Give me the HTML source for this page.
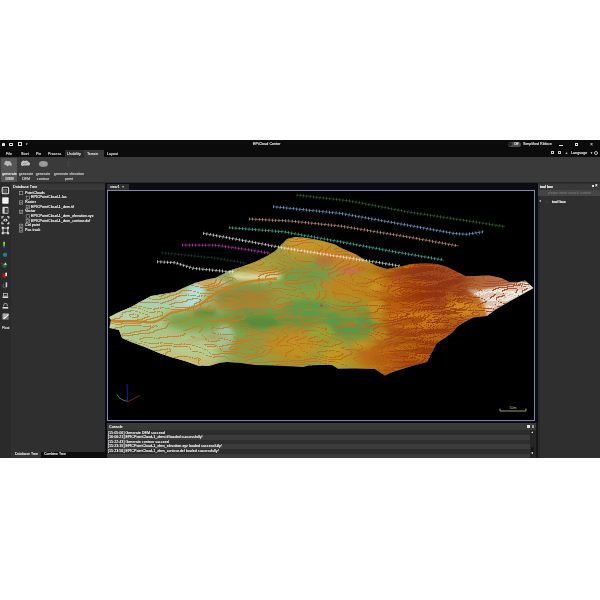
<!DOCTYPE html>
<html>
<head>
<meta charset="utf-8">
<title>EPiCloud Center</title>
<style>
html,body{margin:0;padding:0;background:#fff;}
body{width:600px;height:600px;position:relative;overflow:hidden;font-family:"Liberation Sans",sans-serif;}
#app{position:absolute;left:0;top:140px;width:600px;height:318px;background:#2e2e2e;overflow:hidden;}
.abs{position:absolute;}
.t{position:absolute;will-change:transform;white-space:nowrap;color:#d8d8d8;font-size:3.7px;line-height:4.8px;text-shadow:0 0 0.25px currentColor;}
#titlebar{left:0;top:0;width:600px;height:17px;background:#0b0b0b;}
#ribbon{left:0;top:17px;width:600px;height:25.5px;background:#3a3a3a;}
#ltool{left:0;top:43px;width:10.5px;height:275px;background:#2a2a2a;}
#lpanel{left:10.5px;top:43px;width:95px;height:275px;background:#2f2f2f;}
#rpanel{left:537.5px;top:43px;width:62.5px;height:275px;background:#2f2f2f;}
#center{left:105px;top:43px;width:433.5px;height:275px;background:#0c0c14;}
#view{left:107px;top:50px;width:428px;height:231px;background:#000;border:0.9px solid #8286b0;box-sizing:border-box;}
</style>
</head>
<body>
<div id="app">
  <div id="titlebar" class="abs"></div>
  <div id="ribbon" class="abs"></div>

  <!-- title bar -->
  <div class="abs" style="left:1.5px;top:3px;width:3.6px;height:3px;background:#e8e8e8;border-radius:0.4px;"></div>
  <div class="abs" style="left:9px;top:2.6px;width:4.4px;height:3.4px;border:0.7px solid #e0e0e0;box-sizing:border-box;border-radius:0.4px;"></div>
  <div class="abs" style="left:18px;top:2.4px;width:3.6px;height:3.8px;border:0.7px solid #e0e0e0;box-sizing:border-box;"></div>
  <div class="t" style="left:25.5px;top:2.2px;font-size:3px;color:#bbb;">▾</div>
  <div class="t" style="left:252.5px;top:2.3px;color:#e6e6e6;">EPiCloud Center</div>
  <div class="abs" style="left:507.5px;top:1.6px;width:13px;height:5.2px;background:#4a4a4a;border-radius:2.6px;"></div>
  <div class="abs" style="left:508.2px;top:2.3px;width:4px;height:4px;background:#222;border-radius:2px;"></div>
  <div class="t" style="left:513.6px;top:1.9px;font-size:3.3px;color:#f4f4f4;">Off</div>
  <div class="t" style="left:522.5px;top:1.8px;color:#ddd;">Simplified Ribbon</div>
  <div class="abs" style="left:559px;top:4.6px;width:3.6px;height:0.6px;background:#ddd;"></div>
  <div class="abs" style="left:574.6px;top:3px;width:3px;height:3px;border:0.6px solid #ddd;box-sizing:border-box;"></div>
  <div class="t" style="left:589.8px;top:1.6px;font-size:5px;color:#bbb;">×</div>
  <!-- menu row -->
  <div class="abs" style="left:65px;top:9.5px;width:18.5px;height:8px;background:#2c2c2c;"></div>
  <div class="abs" style="left:84px;top:9.5px;width:19.5px;height:8px;background:#3a3a3a;"></div>
  <div class="t" style="left:6px;top:11.6px;">File</div>
  <div class="t" style="left:20.5px;top:11.6px;">Start</div>
  <div class="t" style="left:35.5px;top:11.6px;">Pie</div>
  <div class="t" style="left:47.5px;top:11.6px;">Process</div>
  <div class="t" style="left:67px;top:11.6px;">Usability</div>
  <div class="t" style="left:87px;top:11.6px;">Terrain</div>
  <div class="t" style="left:106.5px;top:11.6px;">Layout</div>
  <div class="abs" style="left:550.5px;top:11.3px;width:3.2px;height:3.2px;border:0.6px solid #ccc;box-sizing:border-box;"></div>
  <div class="abs" style="left:557.5px;top:11.3px;width:3.2px;height:3.2px;border:0.6px solid #ccc;box-sizing:border-box;border-radius:0.6px;"></div>
  <div class="t" style="left:564.6px;top:11.2px;font-size:3px;color:#ccc;">▲</div>
  <div class="t" style="left:570.5px;top:11.4px;color:#e0e0e0;">Language</div>
  <div class="t" style="left:589.6px;top:11px;font-size:3px;color:#ccc;">▼</div>
  <div class="abs" style="left:594.2px;top:11px;width:3.6px;height:3.6px;border:0.6px solid #bbb;box-sizing:border-box;border-radius:2px;"></div>
  <!-- ribbon -->
  <div class="abs" style="left:1px;top:18px;width:16px;height:24px;background:#555;"></div>
  <svg class="abs" style="left:0;top:17px;" width="100" height="26" viewBox="0 0 100 26">
    <g fill="#b8b8b8"><circle cx="6.6" cy="5.4" r="1.7"/><circle cx="9" cy="6" r="1.9"/><circle cx="7.6" cy="7.6" r="1.6"/><circle cx="10.6" cy="7.4" r="1.3"/><circle cx="5.4" cy="6.8" r="1.2"/></g>
    <g fill="#c4c4c4"><ellipse cx="25.2" cy="6.4" rx="4.2" ry="2.2"/><circle cx="23.6" cy="5.4" r="1.8"/><circle cx="26.4" cy="5.2" r="1.6"/><circle cx="28.6" cy="7" r="1.4"/><circle cx="22.4" cy="7.6" r="1.3"/></g>
    <path d="M22.6 7.2l1.6-1.4l1.4 1.2l1.6-1.6" fill="none" stroke="#666" stroke-width="0.6"/>
    <ellipse cx="43.4" cy="7" rx="4.6" ry="2.9" fill="#8e8e8e"/>
    <ellipse cx="43.4" cy="6.6" rx="3.2" ry="1.7" fill="none" stroke="#b4b4b4" stroke-width="0.6"/>
    <ellipse cx="43.4" cy="6.4" rx="1.5" ry="0.7" fill="#a8a8a8"/>
    <path d="M69.8 4.4a2.2 2.2 0 1 0 0 4.4" fill="none" stroke="#4c4c4c" stroke-width="0.9"/>
  </svg>
  <div class="t" style="left:1.5px;top:31.8px;width:15px;text-align:center;color:#e4e4e4;">generate<br>DSM</div>
  <div class="t" style="left:17.5px;top:31.8px;width:16px;text-align:center;color:#c4c4c4;">generate<br>DEM</div>
  <div class="t" style="left:35.2px;top:31.8px;width:16px;text-align:center;color:#c4c4c4;">generate<br>contour</div>
  <div class="t" style="left:53px;top:31.8px;width:32px;text-align:center;color:#c4c4c4;">generate elevation<br>point</div>
  <div class="abs" style="left:0;top:42px;width:600px;height:1px;background:#2a2a2a;"></div>
  <div id="ltool" class="abs"></div>
  <div id="lpanel" class="abs"></div>

  <!-- left panel -->
  <div class="abs" style="left:10.5px;top:43.5px;width:95px;height:6px;background:#383838;"></div>
  <div class="t" style="left:12.5px;top:45px;color:#f2f2f2;">Database Tree</div>
  <!--TREE-START-->
  <div class="t" style="left:24.6px;top:50.80px;color:#f0f0f0;">PointClouds</div>
  <div class="t" style="left:31.2px;top:55.46px;color:#f0f0f0;">EPICPointCloud-1.las</div>
  <div class="t" style="left:24.6px;top:60.12px;color:#f0f0f0;">Raster</div>
  <div class="t" style="left:31.2px;top:64.78px;color:#f0f0f0;">EPICPointCloud-1_dem.tif</div>
  <div class="t" style="left:24.6px;top:69.44px;color:#f0f0f0;">Vector</div>
  <div class="t" style="left:31.2px;top:74.10px;color:#f0f0f0;">EPICPointCloud-1_dem_elevation.xyz</div>
  <div class="t" style="left:31.2px;top:78.76px;color:#f0f0f0;">EPICPointCloud-1_dem_contour.dxf</div>
  <div class="t" style="left:24.6px;top:83.42px;color:#f0f0f0;">Ctrl point</div>
  <div class="t" style="left:24.6px;top:88.08px;color:#f0f0f0;">Pos track</div>
  <svg class="abs" style="left:0;top:0;" width="106" height="120" viewBox="0 0 106 120"><rect x="19.50" y="51.50" width="3.3" height="3.3" fill="#2a2a2a" stroke="#c4c4c4" stroke-width="0.5"/><rect x="26.10" y="56.16" width="3.3" height="3.3" fill="#2a2a2a" stroke="#c4c4c4" stroke-width="0.5"/><rect x="19.50" y="60.82" width="3.3" height="3.3" fill="#2a2a2a" stroke="#c4c4c4" stroke-width="0.5"/><path d="M20.20 62.52l0.8 0.8l1.2-1.8" fill="none" stroke="#d0d0d0" stroke-width="0.55"/><rect x="26.10" y="65.48" width="3.3" height="3.3" fill="#2a2a2a" stroke="#c4c4c4" stroke-width="0.5"/><path d="M26.80 67.18l0.8 0.8l1.2-1.8" fill="none" stroke="#d0d0d0" stroke-width="0.55"/><rect x="19.50" y="70.14" width="3.3" height="3.3" fill="#2a2a2a" stroke="#c4c4c4" stroke-width="0.5"/><path d="M20.20 71.84l0.8 0.8l1.2-1.8" fill="none" stroke="#d0d0d0" stroke-width="0.55"/><rect x="26.10" y="74.80" width="3.3" height="3.3" fill="#2a2a2a" stroke="#c4c4c4" stroke-width="0.5"/><rect x="26.10" y="79.46" width="3.3" height="3.3" fill="#2a2a2a" stroke="#c4c4c4" stroke-width="0.5"/><path d="M26.80 81.16l0.8 0.8l1.2-1.8" fill="none" stroke="#d0d0d0" stroke-width="0.55"/><rect x="19.50" y="84.12" width="3.3" height="3.3" fill="#2a2a2a" stroke="#c4c4c4" stroke-width="0.5"/><path d="M20.20 85.82l0.8 0.8l1.2-1.8" fill="none" stroke="#d0d0d0" stroke-width="0.55"/><rect x="19.50" y="88.78" width="3.3" height="3.3" fill="#2a2a2a" stroke="#c4c4c4" stroke-width="0.5"/><path d="M20.20 90.48l0.8 0.8l1.2-1.8" fill="none" stroke="#d0d0d0" stroke-width="0.55"/></svg>
  <!--TREE-END-->
  <svg class="abs" style="left:0;top:43px;" width="11" height="275" viewBox="0 183 11 275">
    <g transform="translate(5.4 190.5) scale(1.15)">
      <rect x="-2.8" y="-2.8" width="5.6" height="5.6" rx="0.9" fill="none" stroke="#e4e4e4" stroke-width="0.9"/>
      <rect x="-1.6" y="-1" width="2.8" height="2.8" fill="#4c4c4c" stroke="#888" stroke-width="0.4"/>
    </g>
    <g transform="translate(5.4 200.5) scale(1.15)">
      <rect x="-2.8" y="-2.8" width="5.6" height="5.6" rx="0.7" fill="#f2f2f2"/>
      <path d="M-2.8 -1.6l1.2-1.2h4.4" fill="none" stroke="#999" stroke-width="0.4"/>
    </g>
    <g transform="translate(5.4 210.3) scale(1.15)">
      <rect x="-2.6" y="-3" width="5.2" height="6" rx="0.7" fill="#d0d0d0"/>
      <rect x="-0.6" y="-2" width="2.6" height="4.2" fill="#3c3c3c"/>
    </g>
    <g transform="translate(5.4 220.2) scale(1.15)">
      <ellipse cx="0" cy="0" rx="1.8" ry="1.2" fill="#cfcfcf"/><circle cx="0" cy="0" r="0.6" fill="#444"/>
      <path d="M-3 -1.4v-1.6h1.6M1.4 -3h1.6v1.6M3 1.4v1.6h-1.6M-1.4 3h-1.6v-1.6" fill="none" stroke="#e4e4e4" stroke-width="0.9"/>
    </g>
    <g transform="translate(5.4 230.5) scale(1.15)">
      <rect x="-2.1" y="-2.1" width="4.2" height="4.2" fill="none" stroke="#e0e0e0" stroke-width="0.8"/>
      <path d="M-3.2 -3.2h1.7v1.7h-1.7zM1.5 -3.2h1.7v1.7h-1.7zM-3.2 1.5h1.7v1.7h-1.7zM1.5 1.5h1.7v1.7h-1.7z" fill="#e4e4e4"/>
    </g>
    <rect x="3.3" y="241.8" width="1.6" height="4.6" fill="#d8d83a"/>
    <rect x="3.3" y="244.4" width="1.6" height="2" fill="#3ab04a"/>
    <rect x="2.6" y="246.4" width="3" height="1.2" fill="#2a3ad0"/>
    <circle cx="5" cy="254.8" r="2.1" fill="#1d8a7a"/>
    <path d="M5 252.7a2.1 2.1 0 0 1 0 4.2z" fill="#2a6ad0"/>
    <circle cx="4.6" cy="265.6" r="2.2" fill="#1f6a55"/>
    <path d="M5.4 262.4l1.6 2.4h-3.2z" fill="#ddd"/>
    <circle cx="1.6" cy="263.6" r="1" fill="#b01818"/>
    <circle cx="4.4" cy="275.6" r="2.4" fill="#b81414"/>
    <rect x="5.4" y="272.6" width="1.6" height="3.6" rx="0.7" fill="#eee"/>
    <path d="M3 285.6a2 2 0 0 0 3.6 1.4" fill="none" stroke="#8a6a5a" stroke-width="1"/>
    <rect x="5.6" y="282.4" width="1.6" height="4.6" fill="#ccc"/>
    <rect x="2.8" y="284" width="1.2" height="1.6" fill="#1d8a5a"/>
    <rect x="2.6" y="296.4" width="5.6" height="1.6" fill="#ddd"/>
    <rect x="3.4" y="293.4" width="4.2" height="2.6" fill="none" stroke="#ccc" stroke-width="0.7"/>
    <rect x="2.6" y="307" width="5.6" height="1.6" fill="#ddd"/>
    <path d="M3.4 306.4l0.8-2.8h2.6l0.8 2.8" fill="none" stroke="#ccc" stroke-width="0.7"/>
    <rect x="2.6" y="313.6" width="6" height="6" fill="#777"/>
    <path d="M2.6 313.6h6l-6 6z" fill="#aaa"/>
    <path d="M3.6 319l5-4.6" stroke="#f4f4f4" stroke-width="1.2"/>
  </svg>
  <div class="t" style="left:2.2px;top:186px;font-size:3.4px;color:#ddd;">Float</div>
  <!-- bottom tabs -->
  <div class="abs" style="left:10.5px;top:311.8px;width:95px;height:6.2px;background:#0d0d0d;"></div>
  <div class="abs" style="left:10.5px;top:311.8px;width:30.5px;height:6.2px;background:#333;"></div>
  <div class="t" style="left:15px;top:312.3px;font-size:3.5px;color:#e6e6e6;">Database Tree</div>
  <div class="t" style="left:44px;top:312.3px;font-size:3.5px;color:#e6e6e6;">Combine Tree</div>
  <div id="center" class="abs"></div>
  <div id="rpanel" class="abs"></div>
  <!-- right panel -->
  <div class="abs" style="left:537.5px;top:43.5px;width:2.5px;height:274.5px;background:#282828;"></div>
  <div class="abs" style="left:537.5px;top:43.5px;width:62.5px;height:6.3px;background:#383838;"></div>
  <div class="t" style="left:539.6px;top:44.7px;color:#f0f0f0;font-weight:bold;font-size:3.3px;">tool box</div>
  <div class="abs" style="left:591.6px;top:45px;width:2.4px;height:2.4px;border:0.5px solid #ddd;box-sizing:border-box;"></div>
  <div class="t" style="left:595.4px;top:43.6px;font-size:4.6px;color:#eee;">×</div>
  <div class="abs" style="left:538px;top:50.3px;width:62px;height:5.6px;background:#454545;"></div>
  <div class="t" style="left:547.5px;top:50.8px;color:#6c6c6c;font-size:3.5px;">please enter search content</div>
  <div class="t" style="left:539.4px;top:60.4px;font-size:2.6px;color:#ddd;">▼</div>
  <div class="abs" style="left:546px;top:60.8px;width:2.4px;height:2.6px;background:#3a3a3a;"></div>
  <div class="t" style="left:551.6px;top:60.2px;color:#e8e8e8;font-weight:bold;font-size:3.5px;">tool box</div>


  <!-- view tab -->
  <div class="abs" style="left:107px;top:43.5px;width:22px;height:6.8px;background:#2f2f2f;"></div>
  <div class="t" style="left:110px;top:45.3px;color:#e4e4e4;">view1</div>
  <div class="t" style="left:121.6px;top:44.9px;font-size:4px;color:#ccc;">×</div>
  <!-- console -->
  <div class="abs" style="left:107px;top:282.5px;width:429px;height:7.5px;background:#393939;"></div>
  <div class="t" style="left:108.6px;top:284.9px;color:#f4f4f4;">Console</div>
  <div class="abs" style="left:107px;top:290px;width:429px;height:28px;background:#2d2d2d;"></div>
  <div class="abs" style="left:107px;top:295px;width:423px;height:4.5px;background:#3b3b3b;"></div>
  <div class="abs" style="left:107px;top:304px;width:423px;height:4.5px;background:#3b3b3b;"></div>
  <div class="abs" style="left:107px;top:313.5px;width:423px;height:4.5px;background:#3b3b3b;"></div>
  <div class="t" style="left:108.4px;top:291.2px;line-height:4.45px;color:#f0f0f0;">[15:05:06] Generate DEM succeed<br>[16:06:21] EPICPointCloud-1_dem.tif loaded successfully!<br>[15:22:43] Generate contour succeed<br>[15:23:15] EPICPointCloud-1_dem_elevation.xyz loaded successfully!<br>[15:23:56] EPICPointCloud-1_dem_contour.dxf loaded successfully!</div>
  <div class="abs" style="left:530px;top:290px;width:5.5px;height:28px;background:#262626;"></div>
  <div class="abs" style="left:535.5px;top:282.5px;width:2.5px;height:35.5px;background:#181818;"></div>
  <div class="t" style="left:531.3px;top:290.6px;font-size:2.6px;color:#f4f4f4;">▲</div>
  <div class="t" style="left:531.3px;top:312.4px;font-size:2.6px;color:#f4f4f4;">▼</div>
  <div class="abs" style="left:531.2px;top:306.5px;width:3px;height:5.5px;background:#161616;"></div>
  <div class="abs" style="left:527.2px;top:285.2px;width:2.6px;height:2.8px;background:#e4e4e4;"></div>
  <div class="abs" style="left:532px;top:285.2px;width:2.4px;height:2.8px;background:#9a9a9a;"></div>
  <div id="view" class="abs"></div>
<!--TERRAIN-START-->
<svg class="abs" style="left:0;top:0;" width="600" height="318" viewBox="0 140 600 318">
<defs>
<clipPath id="tc"><polygon points="109,317 117,313 131,307 151,296 163,294 175,292 183,288 195,283 209,279 215,278 231,270 241,267 255,262 267,256 275,251 281,245 287,239 295,237 307,238 323,241 335,244.5 341,248 355,254 365,260 377,266 387,269 399,267 411,264 425,263.5 437,264 447,267 457,272 465,276 475,276 489,275.6 501,278 509,282 517,282.4 525,280.4 533.5,288 521,295 505,304 495,310 487,316 473,317.6 463,323 457,327 453,332 445,338 440,341 437,343 431,354 427,362 415,365 405,368 391,372.4 385,375.6 375,369 355,368.4 338,368.8 332,365 320,365 309,365.6 303,367 295,366.6 275,365.6 255,365 241,363 227,362 219,363 209,366 199,366 185,361 171,357 159,353 145,347 131,342 122,338 119,330 109.4,328 111,320"/></clipPath>
<linearGradient id="tg" x1="108" y1="0" x2="534" y2="0" gradientUnits="userSpaceOnUse"><stop offset="0" stop-color="#c4d4a4"/><stop offset="0.2" stop-color="#a8c088"/><stop offset="0.32" stop-color="#86a450"/><stop offset="0.5" stop-color="#8aa040"/><stop offset="0.64" stop-color="#c08418"/><stop offset="0.8" stop-color="#b05c14"/><stop offset="0.9" stop-color="#b8743c"/><stop offset="1" stop-color="#e8e2d8"/></linearGradient>
<filter id="bl" x="-50%" y="-50%" width="200%" height="200%"><feGaussianBlur stdDeviation="5"/></filter>
<filter id="b2" x="-50%" y="-50%" width="200%" height="200%"><feGaussianBlur stdDeviation="2"/></filter>
<filter id="b4" x="-20%" y="-20%" width="140%" height="140%"><feGaussianBlur stdDeviation="1.3"/></filter>
<filter id="b3" x="-20%" y="-20%" width="140%" height="140%"><feGaussianBlur stdDeviation="0.5"/></filter>
<filter id="ct" x="0" y="0" width="100%" height="100%" color-interpolation-filters="sRGB"><feTurbulence type="fractalNoise" baseFrequency="0.014 0.042" numOctaves="3" seed="5"/><feColorMatrix type="matrix" values="0 0 0 0 0  0 0 0 0 0  0 0 0 0 0  1 0 0 0 0"/><feComponentTransfer result="p"><feFuncA type="discrete" tableValues="0.0000 0.1111 0.2222 0.3333 0.4444 0.5556 0.6667 0.7778 0.8889 1.0000"/></feComponentTransfer><feOffset in="p" dx="0.6" dy="0.6" result="q"/><feComposite in="p" in2="q" operator="arithmetic" k1="0" k2="40" k3="-40" k4="0" result="e1"/><feComposite in="q" in2="p" operator="arithmetic" k1="0" k2="40" k3="-40" k4="0" result="e2"/><feComposite in="e1" in2="e2" operator="arithmetic" k1="0" k2="1" k3="1" k4="0"/><feGaussianBlur stdDeviation="0.3" result="a"/><feComposite in="SourceGraphic" in2="a" operator="in"/></filter><filter id="ct2" x="0" y="0" width="100%" height="100%" color-interpolation-filters="sRGB"><feTurbulence type="fractalNoise" baseFrequency="0.016 0.07" numOctaves="2" seed="11"/><feColorMatrix type="matrix" values="0 0 0 0 0  0 0 0 0 0  0 0 0 0 0  0 1 0 0 0"/><feComponentTransfer result="p"><feFuncA type="discrete" tableValues="0.0000 0.0435 0.0870 0.1304 0.1739 0.2174 0.2609 0.3043 0.3478 0.3913 0.4348 0.4783 0.5217 0.5652 0.6087 0.6522 0.6957 0.7391 0.7826 0.8261 0.8696 0.9130 0.9565 1.0000"/></feComponentTransfer><feOffset in="p" dx="0.5" dy="0.5" result="q"/><feComposite in="p" in2="q" operator="arithmetic" k1="0" k2="60" k3="-60" k4="0" result="e1"/><feComposite in="q" in2="p" operator="arithmetic" k1="0" k2="60" k3="-60" k4="0" result="e2"/><feComposite in="e1" in2="e2" operator="arithmetic" k1="0" k2="1" k3="1" k4="0"/><feGaussianBlur stdDeviation="0.3" result="a"/><feComposite in="SourceGraphic" in2="a" operator="in"/></filter><linearGradient id="lg" x1="108" y1="0" x2="534" y2="0" gradientUnits="userSpaceOnUse"><stop offset="0" stop-color="#c87a24" stop-opacity="0.75"/><stop offset="0.25" stop-color="#c87a24" stop-opacity="0.85"/><stop offset="0.6" stop-color="#bc6c1c"/><stop offset="0.7" stop-color="#a04414"/><stop offset="1" stop-color="#a85a3a"/></linearGradient><linearGradient id="lg2" x1="108" y1="0" x2="534" y2="0" gradientUnits="userSpaceOnUse"><stop offset="0.62" stop-color="#8c2e10" stop-opacity="0"/><stop offset="0.74" stop-color="#8c2a0c" stop-opacity="0.6"/><stop offset="0.82" stop-color="#8c2e10" stop-opacity="0.7"/><stop offset="0.88" stop-color="#a85a3a" stop-opacity="0.25"/></linearGradient><filter id="st" x="0" y="0" width="100%" height="100%" color-interpolation-filters="sRGB"><feTurbulence type="fractalNoise" baseFrequency="0.022 0.11" numOctaves="3" seed="23" result="n"/><feColorMatrix in="n" type="matrix" values="0 0 0 0 0  0 0 0 0 0  0 0 0 0 0  0 0 5 0 -2.2" result="a"/><feComposite in="SourceGraphic" in2="a" operator="in"/></filter><linearGradient id="sg" x1="108" y1="0" x2="534" y2="0" gradientUnits="userSpaceOnUse"><stop offset="0.1" stop-color="#c89030" stop-opacity="0"/><stop offset="0.3" stop-color="#b8842c" stop-opacity="0.4"/><stop offset="0.58" stop-color="#c08620" stop-opacity="0.45"/><stop offset="0.7" stop-color="#8a2c0c" stop-opacity="0.4"/><stop offset="0.8" stop-color="#8a2c0c" stop-opacity="0.4"/><stop offset="0.88" stop-color="#a85a3a" stop-opacity="0"/></linearGradient>
</defs>
<g clip-path="url(#tc)">
<rect x="100" y="230" width="440" height="150" fill="url(#tg)"/>
<g filter="url(#bl)">
<ellipse cx="150" cy="308" rx="40" ry="14" fill="#aed0a0" opacity="1"/>
<ellipse cx="140" cy="332" rx="30" ry="10" fill="#a6c88e" opacity="1"/>
<ellipse cx="180" cy="350" rx="48" ry="12" fill="#b4cc90" opacity="1"/>
<ellipse cx="195" cy="320" rx="32" ry="11" fill="#74a24a" opacity="1"/>
<ellipse cx="243" cy="298" rx="30" ry="12" fill="#8a8638" opacity="1"/>
<ellipse cx="255" cy="264" rx="26" ry="8" fill="#aaa040" opacity="1"/>
<ellipse cx="308" cy="247" rx="28" ry="10" fill="#c8942a" opacity="1"/>
<ellipse cx="308" cy="275" rx="28" ry="14" fill="#709c48" opacity="1"/>
<ellipse cx="275" cy="320" rx="60" ry="10" fill="#649240" opacity="1"/>
<ellipse cx="250" cy="345" rx="30" ry="14" fill="#7ea24a" opacity="1"/>
<ellipse cx="290" cy="346" rx="26" ry="16" fill="#bc8e24" opacity="1"/>
<ellipse cx="350" cy="287" rx="26" ry="13" fill="#bc861e" opacity="1"/>
<ellipse cx="345" cy="258" rx="20" ry="8" fill="#c8822a" opacity="1"/>
<ellipse cx="350" cy="322" rx="28" ry="18" fill="#56a04c" opacity="1"/>
<ellipse cx="335" cy="356" rx="12" ry="10" fill="#c8a41c" opacity="1"/>
<ellipse cx="418" cy="300" rx="34" ry="34" fill="#b85c10" opacity="1"/>
<ellipse cx="415" cy="320" rx="30" ry="10" fill="#c87412" opacity="1"/>
<ellipse cx="392" cy="356" rx="36" ry="14" fill="#b8640e" opacity="1"/>
<ellipse cx="447" cy="292" rx="22" ry="26" fill="#a8501a" opacity="1"/>
<ellipse cx="466" cy="308" rx="22" ry="10" fill="#d08418" opacity="1"/>
<ellipse cx="492" cy="281" rx="26" ry="5" fill="#b4683a" opacity="1"/>
</g>
<g filter="url(#b2)">
<ellipse cx="196" cy="292" rx="9" ry="8" fill="#a8e0dc" opacity="1"/>
<ellipse cx="191" cy="300" rx="9" ry="8" fill="#a8e0dc" opacity="1"/>
<ellipse cx="194" cy="296" rx="7" ry="9" fill="#aae2de" opacity="1"/>
<ellipse cx="180" cy="303" rx="8" ry="8" fill="#bcd8bc" opacity="0.9"/>
<ellipse cx="160" cy="303" rx="26" ry="5" fill="#a6d2b6" opacity="0.9"/>
<ellipse cx="128" cy="316" rx="12" ry="4" fill="#b0d6bc" opacity="0.8"/>
<ellipse cx="210" cy="283" rx="16" ry="4" fill="#d0b070" opacity="0.9"/>
<ellipse cx="205" cy="313" rx="12" ry="4" fill="#5c8c3a" opacity="0.95"/>
<ellipse cx="222" cy="284" rx="7" ry="3" fill="#bcd8c0" opacity="0.7"/>
<ellipse cx="256" cy="276" rx="26" ry="5" fill="#dcdca4" opacity="1"/>
<ellipse cx="262" cy="277" rx="16" ry="3" fill="#d8d49c" opacity="1"/>
<ellipse cx="225" cy="338" rx="9" ry="14" fill="#a0c8a0" opacity="0.9"/>
<ellipse cx="258" cy="323" rx="20" ry="5" fill="#5a8a3a" opacity="0.95"/>
<ellipse cx="306" cy="309" rx="24" ry="9" fill="#5a9a4a" opacity="1"/>
<ellipse cx="322" cy="333" rx="12" ry="8" fill="#90a838" opacity="0.9"/>
<ellipse cx="352" cy="326" rx="22" ry="10" fill="#52994c" opacity="1"/>
<ellipse cx="340" cy="318" rx="14" ry="8" fill="#569a4a" opacity="1"/>
<ellipse cx="325" cy="260" rx="10" ry="6" fill="#b86a3a" opacity="0.8"/>
<ellipse cx="350" cy="270" rx="13" ry="2.5" fill="#d0606a" opacity="1"/>
<ellipse cx="399" cy="277" rx="6" ry="2.5" fill="#cc5c62" opacity="0.9"/>
<ellipse cx="160" cy="358" rx="30" ry="4" fill="#d4c480" opacity="0.9"/>
<ellipse cx="200" cy="362" rx="20" ry="3" fill="#d0c078" opacity="0.9"/>
<ellipse cx="300" cy="240" rx="10" ry="3" fill="#d09c30" opacity="0.9"/>
<ellipse cx="430" cy="274" rx="24" ry="8" fill="#98441a" opacity="0.95"/>
<ellipse cx="455" cy="284" rx="12" ry="8" fill="#a04a1a" opacity="0.8"/>
<ellipse cx="400" cy="332" rx="24" ry="4" fill="#a04810" opacity="0.8"/>
<ellipse cx="420" cy="348" rx="12" ry="6" fill="#a85410" opacity="0.8"/>
<ellipse cx="395" cy="290" rx="14" ry="8" fill="#c06a14" opacity="0.8"/>
<ellipse cx="376" cy="300" rx="7" ry="22" fill="#c8921e" opacity="0.9"/>
<ellipse cx="380" cy="335" rx="8" ry="10" fill="#b88a20" opacity="0.8"/>
<ellipse cx="365" cy="345" rx="12" ry="4" fill="#c8a028" opacity="0.7"/>
</g><g filter="url(#b4)">
<polygon points="466,289 480,290 497,287.5 520,283.5 527,281.5 534,288 521,295 505,304 495,310 487,316 484,306 478,297" fill="#ebe5dc"/>
</g>
<rect x="100" y="230" width="440" height="150" fill="url(#sg)" filter="url(#st)"/>
<g filter="url(#b2)"><ellipse cx="415" cy="320" rx="28" ry="7" fill="#cc7c16" opacity="0.75"/><ellipse cx="466" cy="307" rx="20" ry="7" fill="#d48a1a" opacity="0.8"/><ellipse cx="400" cy="354" rx="25" ry="7" fill="#c47010" opacity="0.55"/><ellipse cx="392" cy="292" rx="10" ry="10" fill="#c87a18" opacity="0.5"/><ellipse cx="300" cy="345" rx="22" ry="10" fill="#c49420" opacity="0.45"/></g>
<g filter="url(#b3)"><path d="M108,320.5 C118,322 130,320 145,322 S165,315 171,313 S188,310 195,307 S205,301 209,298 S220,291 225,289 S240,283 250,281.5 S268,279 277,278.5" fill="none" stroke="#c8801c" stroke-width="2.3" opacity="0.9"/></g>
<rect x="100" y="230" width="440" height="150" fill="url(#lg)" filter="url(#ct)"/><rect x="100" y="230" width="440" height="150" fill="url(#lg2)" filter="url(#ct2)"/>
</g>
<path d="M296.7,195 L350,201 L406.7,211.7 L473.3,221.7 L505,226.7" fill="none" stroke="#3c7a38" stroke-width="0.55" opacity="0.9"/>
<path d="M296.7,195 L350,201 L406.7,211.7 L473.3,221.7 L505,226.7" fill="none" stroke="#3c7a38" stroke-width="3.2" stroke-dasharray="0.65 2.65" opacity="0.9"/>
<path d="M273.3,206.7 L340,213.3 L406.7,225 L453.3,233.3 L466.7,234.3 L483.3,231.7" fill="none" stroke="#78b4ea" stroke-width="0.55" opacity="1"/>
<path d="M273.3,206.7 L340,213.3 L406.7,225 L453.3,233.3 L466.7,234.3 L483.3,231.7" fill="none" stroke="#78b4ea" stroke-width="3.2" stroke-dasharray="0.65 2.65" opacity="1"/>
<path d="M249,219 L290,221 L340,226 L406.7,236.7 L458.3,246" fill="none" stroke="#d8a08c" stroke-width="0.55" opacity="1"/>
<path d="M249,219 L290,221 L340,226 L406.7,236.7 L458.3,246" fill="none" stroke="#d8a08c" stroke-width="3.2" stroke-dasharray="0.65 2.65" opacity="1"/>
<path d="M229,227.7 L283,231.7 L340,241.7 L390,251 L443.3,260" fill="none" stroke="#48c8a8" stroke-width="0.55" opacity="1"/>
<path d="M229,227.7 L283,231.7 L340,241.7 L390,251 L443.3,260" fill="none" stroke="#48c8a8" stroke-width="3.2" stroke-dasharray="0.65 2.65" opacity="1"/>
<path d="M203.3,233.3 L250,241.7 L280,247.3 L340,256.7 L373.3,261.7 L400,266" fill="none" stroke="#ececec" stroke-width="0.55" opacity="1"/>
<path d="M203.3,233.3 L250,241.7 L280,247.3 L340,256.7 L373.3,261.7 L400,266" fill="none" stroke="#ececec" stroke-width="3.2" stroke-dasharray="0.65 2.65" opacity="1"/>
<path d="M182.3,245 L216.7,245.3 L250,250 L270,253.3" fill="none" stroke="#c040c0" stroke-width="0.55" opacity="1"/>
<path d="M182.3,245 L216.7,245.3 L250,250 L270,253.3" fill="none" stroke="#c040c0" stroke-width="3.2" stroke-dasharray="0.65 2.65" opacity="1"/>
<path d="M161.7,252.7 L216.7,258.3 L246.7,263.3" fill="none" stroke="#1f4a3a" stroke-width="0.55" opacity="0.9"/>
<path d="M161.7,252.7 L216.7,258.3 L246.7,263.3" fill="none" stroke="#1f4a3a" stroke-width="3.2" stroke-dasharray="0.65 2.65" opacity="0.9"/>
<path d="M157.3,261.7 L175,262.7 L193.3,268.3 L228.3,271.7 L234,271.5" fill="none" stroke="#ececec" stroke-width="0.55" opacity="1"/>
<path d="M157.3,261.7 L175,262.7 L193.3,268.3 L228.3,271.7 L234,271.5" fill="none" stroke="#ececec" stroke-width="3.2" stroke-dasharray="0.65 2.65" opacity="1"/>
<path d="M127.5,401.5L127,384" stroke="#2020b8" stroke-width="0.9" fill="none"/>
<path d="M127.5,401.5L122,399.6" stroke="#8a8a8a" stroke-width="0.7" fill="none"/><path d="M122,399.6Q118.5,398 117,394.5" stroke="#28b43c" stroke-width="0.9" fill="none"/>
<path d="M127.5,401.8L140,395.5" stroke="#8a2020" stroke-width="0.9" fill="none"/>
<path d="M500,408.6V411H526V408.6" stroke="#c8c890" stroke-width="0.8" fill="none"/>
<text x="513" y="409.4" font-size="3.6" fill="#c8c890" text-anchor="middle" font-family="Liberation Sans, sans-serif">50m</text>
<circle cx="321.5" cy="305.5" r="1" fill="#e02a10"/>
</svg>
<!--TERRAIN-END-->
</div>
</body>
</html>
